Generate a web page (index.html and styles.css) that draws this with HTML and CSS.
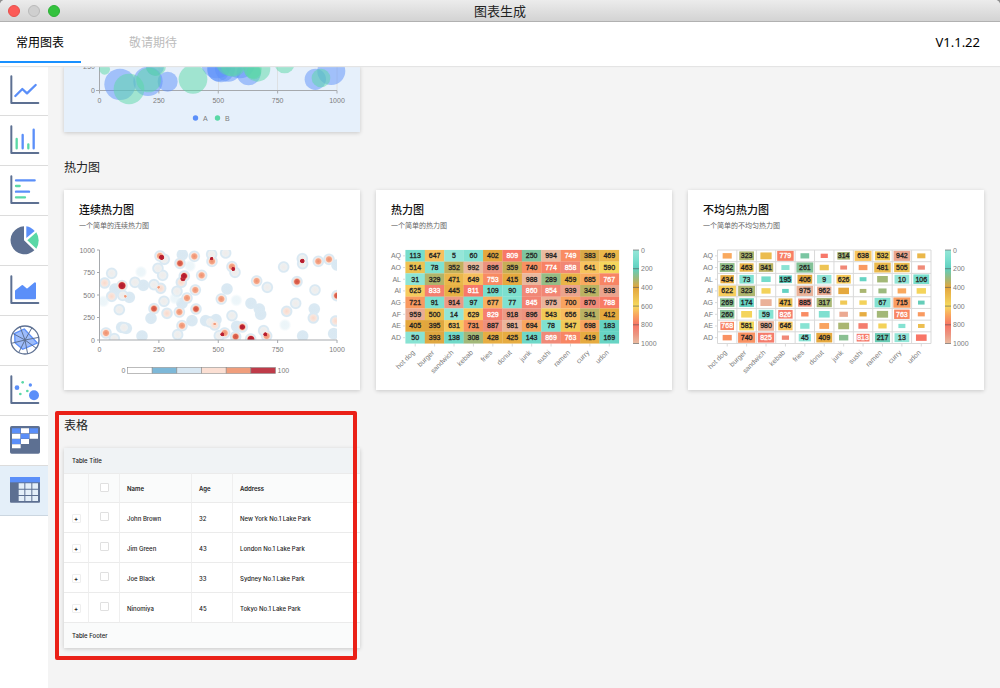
FILE: index.html
```html
<!DOCTYPE html>
<html lang="zh-CN">
<head>
<meta charset="utf-8">
<title>图表生成</title>
<link rel="stylesheet" href="styles.css">
</head>
<body>
<div class="window">
  <div class="titlebar">
    <div class="lights"><span class="light close"></span><span class="light minimize"></span><span class="light maximize"></span></div>
    <h1 class="window-title">图表生成</h1>
  </div>
  <header class="header">
    <div class="tabs">
      <button class="tab active" type="button">常用图表</button>
      <button class="tab pending" type="button">敬请期待</button>
    </div>
    <span class="version">V1.1.22</span>
  </header>
  <div class="body">
    <nav class="sidebar">
      <button class="nav" type="button" aria-label="折线图"><svg viewBox="0 0 90 90"><path class="axis" d="M4 4V84H85"/><path class="s blue" d="M16 63 37 42 51 55 77 30"/></svg></button>
      <button class="nav" type="button" aria-label="柱状图"><svg viewBox="0 0 90 90"><path class="axis" d="M4 4V84H85"/><path class="s blue" d="M38 30V70M71 14V70"/><path class="s green" d="M20 42V70M55 58V70"/></svg></button>
      <button class="nav" type="button" aria-label="条形图"><svg viewBox="0 0 90 90"><path class="axis" d="M4 4V84H85"/><path class="s blue" d="M18 16H74M18 50H57"/><path class="s green" d="M18 33H29M18 67H45"/></svg></button>
      <button class="nav" type="button" aria-label="饼图"><svg viewBox="0 0 90 90"><path fill="#5d7092" d="M42 4V46L73 76A42 42 0 1 1 42 4Z"/><path fill="#5b8ff9" d="M49 4Q63 6 74 18L49 39Z"/><path fill="#5ad8a6" d="M79 22Q93 46 79 71L52 46Z"/></svg></button>
      <button class="nav" type="button" aria-label="面积图"><svg viewBox="0 0 90 90"><path class="axis" d="M4 4V84H85"/><path fill="#5b8ff9" stroke="#5b8ff9" stroke-width="6" stroke-linejoin="round" d="M18 48 37 33 51 45 75 25V70H18Z"/></svg></button>
      <button class="nav" type="button" aria-label="雷达图"><svg viewBox="0 0 90 90"><path fill="#5b8ff9" fill-opacity=".6" stroke="#5b8ff9" stroke-width="4" d="M14 25 43 12 82 54 38 73 15 53Z"/><g fill="none" stroke="#5d7092" stroke-width="4"><circle cx="45" cy="45" r="42"/><path stroke-width="3" d="M45 45 30 5M45 45 66 8M45 45 87 37M45 45 79 70M45 45 53 87M45 45 26 83M45 45 4 55M45 45 8 25"/></g></svg></button>
      <button class="nav" type="button" aria-label="散点图"><svg viewBox="0 0 90 90"><path class="axis" d="M4 4V84H85"/><g fill="#5b8ff9"><circle cx="21" cy="38" r="7"/><circle cx="61" cy="30" r="5"/><circle cx="72" cy="61" r="15"/></g><g fill="#5ad8a6"><circle cx="38" cy="22" r="4"/><circle cx="31" cy="57" r="4"/><circle cx="52" cy="48" r="4"/></g></svg></button>
      <button class="nav" type="button" aria-label="热力图"><svg viewBox="0 0 90 90"><rect y="3" width="90" height="83" rx="5" fill="#5d7092"/><path fill="#5b8ff9" d="M6 10H32V25H6ZM58 10H84V25H58ZM32 26H58V41H32ZM6 42H32V57H6Z"/><path fill="#fff" d="M33 10H57V25H33ZM6 26H31V41H6ZM59 26H84V41H59ZM33 42H57V57H33ZM6 58H32V70H6Z"/></svg></button>
      <button class="nav current" type="button" aria-label="表格"><svg viewBox="0 0 90 90"><rect y="6" width="90" height="77" rx="3" fill="#5d7092"/><path fill="#5b8ff9" d="M0 6H90V22H0Z"/><path fill="#e4eff9" d="M26 25H43V41H26ZM46 25H64V41H46ZM67 25H84V41H67ZM26 44H43V60H26ZM46 44H64V60H46ZM67 44H84V60H67ZM26 63H43V78H26ZM46 63H64V78H46ZM67 63H84V78H67Z"/></svg></button>
    </nav>
    <main class="content">
      <section class="grid">
        <article class="card selected"><svg class="chart" id="bubble" viewBox="0 0 296 66"></svg></article>
      </section>
      <section>
        <h2 class="section-title">热力图</h2>
        <div class="grid">
          <article class="card"><h3>连续热力图</h3><p>一个简单的连续热力图</p><svg class="chart" id="density" viewBox="0 42 296 158"></svg></article>
          <article class="card"><h3>热力图</h3><p>一个简单的热力图</p><svg class="chart" id="heat" viewBox="0 42 296 158"></svg></article>
          <article class="card"><h3>不均匀热力图</h3><p>一个简单的不均匀热力图</p><svg class="chart" id="uneven" viewBox="0 42 296 158"></svg></article>
        </div>
      </section>
      <section>
        <h2 class="section-title">表格</h2>
        <div class="grid">
          <div class="marked">
            <article class="card table-card">
              <div class="table-title">Table Title</div>
              <table>
                <colgroup><col class="c-expand"><col class="c-check"><col class="c-name"><col class="c-age"><col></colgroup>
                <thead><tr><th></th><th class="mid"><input type="checkbox" aria-label="Select all"></th><th>Name</th><th>Age</th><th>Address</th></tr></thead>
                <tbody>
                  <tr><td class="mid"><button class="expand" type="button">+</button></td><td class="mid"><input type="checkbox" aria-label="John Brown"></td><td>John Brown</td><td>32</td><td>New York No.1 Lake Park</td></tr>
                  <tr><td class="mid"><button class="expand" type="button">+</button></td><td class="mid"><input type="checkbox" aria-label="Jim Green"></td><td>Jim Green</td><td>43</td><td>London No.1 Lake Park</td></tr>
                  <tr><td class="mid"><button class="expand" type="button">+</button></td><td class="mid"><input type="checkbox" aria-label="Joe Black"></td><td>Joe Black</td><td>33</td><td>Sydney No.1 Lake Park</td></tr>
                  <tr><td class="mid"><button class="expand" type="button">+</button></td><td class="mid"><input type="checkbox" aria-label="Ninomiya"></td><td>Ninomiya</td><td>45</td><td>Tokyo No.1 Lake Park</td></tr>
                </tbody>
              </table>
              <div class="table-footer">Table Footer</div>
            </article>
            <div class="highlight"></div>
          </div>
        </div>
      </section>
    </main>
  </div>
</div>
<script src="charts.js"></script>
</body>
</html>
```

FILE: styles.css
```css
* { box-sizing: border-box; }
body { margin: 0; background: #8f8f8f; color: #000; font-family: Inter, "Noto Sans CJK SC", sans-serif; }
h1, h2, h3, p { margin: 0; font-weight: 400; }
button { margin: 0; padding: 0; border: 0; background: none; font: inherit; color: inherit; }

.window { display: flex; flex-direction: column; height: 100vh; overflow: hidden; border-radius: 5px 5px 0 0; background: #f4f4f4; }
.titlebar { display: grid; grid-template-columns: 1fr auto 1fr; align-items: center; flex: none; height: 22px; padding: 0 8px; background: linear-gradient(#ececec, #d3d3d3); border-bottom: 1px solid #b1b1b1; }
.lights { display: flex; gap: 8px; }
.light { width: 12px; height: 12px; border-radius: 50%; border: 1px solid; }
.close { background: #fc5b57; border-color: #e5504b; }
.minimize { background: #cfcfcf; border-color: #b9b9b9; }
.maximize { background: #34c23e; border-color: #2bb035; }
.window-title { font-size: 13px; line-height: 20px; color: #222; }

.header { display: flex; justify-content: space-between; flex: none; height: 44px; padding-right: 20px; background: #fff; box-shadow: 0 1px 1px #e4e4e4; position: relative; z-index: 1; }
.tabs { display: flex; gap: 32px; }
.tab { height: 41px; width: 81px; padding: 0 16px; text-align: left; font-size: 12px; white-space: nowrap; border-bottom: 2px solid transparent; }
.tab.active { border-color: #1890ff; }
.tab.pending { color: #bcbcbc; }
.version { font-family: "Noto Sans", sans-serif; font-size: 13px; line-height: 41px; }

.body { display: flex; flex: 1; min-height: 0; }
.sidebar { flex: none; width: 48px; background: #fff; }
.nav { display: flex; align-items: center; justify-content: center; width: 100%; height: 50px; padding: 0 0 1px 2px; border-bottom: 1px solid #dcdcdc; }
.nav svg { width: 30px; height: 30px; }
.nav.current { background: #e4eff9; border-color: #cbd6e0; }
.axis { fill: none; stroke: #5d7092; stroke-width: 6; stroke-linecap: round; stroke-linejoin: round; }
.s { fill: none; stroke-width: 7; stroke-linecap: round; stroke-linejoin: round; }
.blue { stroke: #5b8ff9; }
.green { stroke: #5ad8a6; }

.content { flex: 1; min-width: 0; padding: 0 16px; overflow: hidden; }
.section-title { padding: 26px 0 12px; font-size: 12px; line-height: 20px; color: #222; }
.grid { display: grid; grid-template-columns: repeat(3, minmax(0, 1fr)); gap: 16px; }
.card { background: #fff; box-shadow: 0 1px 4px rgba(0, 0, 0, .18); }
.card.selected { background: #e6f0fb; }
.card h3 { padding: 12px 15px 0; font-size: 11px; line-height: 16px; font-weight: 500; color: #111; }
.card p { padding: 2px 15px 0; font-size: 7px; line-height: 12px; color: #666; }
.chart { display: block; width: 100%; font-family: "Liberation Sans", Arial, sans-serif; font-size: 7px; fill: #7c7c7c; }
.start { text-anchor: start; }
.middle { text-anchor: middle; }
.end { text-anchor: end; }
.rule { fill: none; stroke: #a6a9ad; stroke-width: 1; }
.gridline { fill: none; stroke: #d9d9d9; stroke-width: 1; }
.value { text-anchor: middle; fill: #222; stroke: #222; stroke-width: .3; }
.value.light-text { fill: #fff; stroke: #fff; }

.marked { position: relative; }
.highlight { position: absolute; top: -37px; right: 3px; bottom: -12px; left: -9px; border: 4px solid #ea2017; border-radius: 2px; pointer-events: none; }
.table-card { font-size: 6px; color: #222; font-weight: 500; }
.table-title { height: 25px; padding: 0 8px; line-height: 25px; background: #f0f3f5; }
.table-footer { height: 25px; padding: 0 8px; line-height: 25px; background: #fafbfb; }
table { width: 100%; table-layout: fixed; border-collapse: separate; border-spacing: 0; }
.c-expand { width: 25px; }
.c-check { width: 31px; }
.c-name { width: 72px; }
.c-age { width: 41px; }
th, td { height: 30px; padding: 1px 7px 0; text-align: left; vertical-align: middle; border-right: 1px solid #efefef; border-bottom: 1px solid #ebebeb; }
th { font-weight: 600; background: #fafbfb; border-top: 1px solid #ebebeb; }
th:last-child, td:last-child { border-right: 0; }
.mid { padding: 1px 0 0; text-align: center; }
input { display: block; appearance: none; width: 9px; height: 9px; margin: 0 auto 3px; border: 1px solid #e0e0e0; border-radius: 1px; background: #fff; }
.expand { display: block; width: 9px; height: 9px; margin: 0 auto; border: 1px solid #eee; border-radius: 1px; line-height: 7px; text-align: center; font-weight: 700; }
```

FILE: charts.js
```js
const NS = 'http://www.w3.org/2000/svg';

function add(parent, tag, attrs, text) {
  const el = document.createElementNS(NS, tag);
  for (const key in attrs) el.setAttribute(key, attrs[key]);
  if (text !== undefined) el.textContent = text;
  parent.appendChild(el);
  return el;
}

const LEFT = 35.5, RIGHT = 273;

function xAxis(svg, y) {
  add(svg, 'path', { class: 'rule', d: `M${LEFT} ${y}H${RIGHT}` });
  for (let i = 0; i <= 4; i++) {
    const x = LEFT + (RIGHT - LEFT) * i / 4;
    add(svg, 'path', { class: 'rule', d: `M${x} ${y}v3` });
    add(svg, 'text', { class: 'middle', x, y: y + 12 }, i * 250);
  }
}

/* Bubble chart */
(function () {
  const svg = document.getElementById('bubble');
  add(svg, 'path', { class: 'gridline', d: 'M95 0V24M154.5 0V24M213.5 0V24M273 0V24M35.5 0.5H273', 'stroke-opacity': .7 });
  add(svg, 'path', { class: 'rule', d: 'M35.5 0V24.5M32 24.5H36' });
  xAxis(svg, 24.5);
  add(svg, 'text', { class: 'end', x: 31, y: 3 }, 250);
  add(svg, 'text', { class: 'end', x: 31, y: 27 }, 0);
  const g = add(svg, 'g', { transform: 'scale(.3333) translate(-192 -198)', 'fill-opacity': .5 });
  const blue = [[360, 253, 47], [444, 244, 44], [503, 245, 30], [465, 200, 27], [650, 188, 47], [663, 205, 42], [655, 212, 32], [685, 205, 40], [720, 190, 45], [746, 220, 36], [946, 238, 32], [994, 213, 42]];
  const green = [[314, 208, 16], [387, 267, 46], [446, 240, 37], [468, 198, 30], [579, 238, 43], [692, 182, 46], [700, 190, 40], [758, 208, 27], [772, 206, 39], [762, 216, 22], [854, 190, 30], [963, 234, 28]];
  blue.forEach(([cx, cy, r]) => add(g, 'circle', { cx, cy, r, fill: '#5b8ff9' }));
  green.forEach(([cx, cy, r]) => add(g, 'circle', { cx, cy, r, fill: '#5ad8a6' }));
  add(svg, 'circle', { cx: 131.5, cy: 52, r: 2.7, fill: '#5b8ff9' });
  add(svg, 'text', { class: 'start', x: 139, y: 55 }, 'A');
  add(svg, 'circle', { cx: 153.5, cy: 52, r: 2.7, fill: '#5ad8a6' });
  add(svg, 'text', { class: 'start', x: 161, y: 55 }, 'B');
})();

/* Continuous heat map: [x, y, intensity 0-6] */
(function () {
  const svg = document.getElementById('density');
  const points = [
    [155, 250, 2], [243, 246, 0], [134, 279, 3], [165, 297, 1], [225, 277, 2], [250, 286, 1], [282, 284, 2], [302, 295, 3], [155, 319, 3], [188, 316, 2], [208, 322, 1], [130, 334, 0], [178, 359, 2], [282, 356, 5], [273, 385, 1], [321, 370, 3], [312, 334, 2], [138, 429, 4], [163, 446, 2], [185, 412, 1], [199, 415, 1], [192, 413, 2], [246, 438, 1],
    [313, 208, 2], [300, 198, 4], [294, 235, 2], [308, 256, 2], [367, 194, 1], [403, 199, 4], [360, 220, 5], [390, 228, 0], [425, 256, 4], [364, 277, 3], [373, 258, 5], [351, 304, 2], [406, 300, 4], [381, 324, 4], [366, 340, 1], [345, 325, 0], [408, 357, 5], [358, 366, 4], [396, 392, 1], [366, 407, 4], [353, 434, 2],
    [455, 193, 2], [456, 214, 4], [497, 189, 2], [516, 230, 4], [525, 247, 2], [501, 297, 1], [529, 331, 0], [573, 340, 1], [484, 327, 4], [590, 273, 4], [622, 292, 2], [598, 357, 1], [602, 373, 1], [516, 377, 2], [468, 389, 1], [437, 392, 1], [450, 396, 2], [464, 405, 3], [494, 429, 4], [478, 437, 2], [530, 409, 1], [547, 411, 5], [527, 440, 5], [572, 447, 5], [611, 422, 2], [620, 438, 4],
    [671, 231, 2], [727, 206, 2], [728, 221, 2], [775, 214, 4], [807, 208, 4], [831, 225, 1], [711, 275, 5], [765, 300, 2], [707, 340, 2], [831, 317, 5], [763, 357, 1], [760, 384, 3], [680, 364, 3], [675, 405, 0], [728, 438, 1], [827, 393, 3], [821, 431, 1]
  ];
  const hot = [[186, 287, 10], [305, 202, 7], [369, 266, 7], [372, 258, 8], [455, 206, 4], [520, 237, 5], [727, 213, 6], [487, 433, 5], [616, 433, 5], [573, 448, 10], [547, 411, 7], [296, 292, 4], [196, 319, 4], [464, 402, 4]];
  const defs = add(svg, 'defs', {});
  const ramp = (id, stops) => {
    const grad = add(defs, 'radialGradient', { id });
    stops.forEach(([offset, color, opacity]) => add(grad, 'stop', { offset, 'stop-color': color, 'stop-opacity': opacity }));
  };
  ramp('h0', [[0, '#e6f2f7', .8], [.6, '#e6f2f7', .7], [1, '#e6f2f7', 0]]);
  ramp('h1', [[0, '#d9e8f2', 1], [.82, '#dae9f3', 1], [1, '#dceaf3', 0]]);
  ramp('c2', [[0, '#f0ecea', 1], [.75, '#edf0f1', 1], [1, '#dceaf3', 0]]);
  ramp('c3', [[0, '#fbd9ca', 1], [.7, '#f7e7e0', 1], [1, '#dceaf3', 0]]);
  ramp('c4', [[0, '#f08f6c', 1], [.55, '#f4a88b', 1], [.75, '#fce3d8', 1], [1, '#f3f3f3', 0]]);
  ramp('c5', [[0, '#d4503f', 1], [.5, '#dd6652', 1], [.72, '#f9d2c1', 1], [1, '#f3f3f3', 0]]);
  ramp('c6', [[0, '#b2182b', 1], [.75, '#bd2636', 1], [1, '#e67b68', 0]]);
  const clip = add(defs, 'clipPath', { id: 'plot' });
  add(clip, 'rect', { x: LEFT, y: 60, width: RIGHT - LEFT, height: 90 });
  const outer = add(svg, 'g', { 'clip-path': 'url(#plot)' });
  const g = add(outer, 'g', { transform: 'translate(-4 0) scale(.3333)' });
  add(g, 'circle', { cx: 186, cy: 287, r: 19, fill: 'url(#h1)' });
  points.forEach(([cx, cy, n]) => add(g, 'circle', { cx, cy, r: 19, fill: n ? 'url(#h1)' : 'url(#h0)' }));
  points.filter(p => p[2] > 1).forEach(([cx, cy, n]) => add(g, 'circle', { cx, cy, r: 14, fill: `url(#c${n})` }));
  add(g, 'circle', { cx: 186, cy: 287, r: 16, fill: 'url(#c5)' });
  hot.forEach(([cx, cy, r], i) => add(g, 'circle', { cx, cy, r: r + 2, fill: i < 11 ? 'url(#c6)' : 'url(#c4)' }));

  add(svg, 'path', { class: 'rule', d: `M${LEFT} 60V150` });
  for (let i = 0; i <= 4; i++) {
    const y = 150 - 22.5 * i;
    add(svg, 'path', { class: 'rule', d: `M33 ${y}H${LEFT}` });
    add(svg, 'text', { class: 'end', x: 31, y: y + 2.5 }, i * 250);
  }
  xAxis(svg, 150);
  ['#ffffff', '#7db8d8', '#d9e8f3', '#fbdfd3', '#f09e7c', '#bf3b49'].forEach((fill, i) =>
    add(svg, 'rect', { x: 63.5 + i * 24.67, y: 177.5, width: 24.67, height: 6, fill, stroke: '#8e8e8e', 'stroke-width': .6 }));
  add(svg, 'text', { class: 'end', x: 61.5, y: 183 }, 0);
  add(svg, 'text', { class: 'start', x: 213.5, y: 183 }, 100);
})();

/* Category heat maps */
const foods = ['hot dog', 'burger', 'sandwich', 'kebab', 'fries', 'donut', 'junk', 'sushi', 'ramen', 'curry', 'udon'];
const names = ['AQ', 'AO', 'AL', 'AI', 'AG', 'AF', 'AE', 'AD'];
const scale = [[0, '#96e6d8'], [100, '#7adfce'], [200, '#5fcfbf'], [300, '#9cba7e'], [400, '#e4a63c'], [500, '#ecbe50'], [600, '#f6da5e'], [700, '#f9a35f'], [800, '#f87566'], [900, '#ec9480'], [1000, '#e9bda2']];
const CW = 213.5 / 11, CH = 93.5 / 8, GX = 29.5, GY = 60;

function colorAt(v) {
  const i = Math.min(scale.findIndex((s, k) => k + 1 === scale.length || scale[k + 1][0] >= v), scale.length - 2);
  const [a, ca] = scale[i], [b, cb] = scale[i + 1], t = (v - a) / (b - a);
  const ch = k => Math.round(parseInt(ca.substr(k, 2), 16) * (1 - t) + parseInt(cb.substr(k, 2), 16) * t);
  return `rgb(${ch(1)},${ch(3)},${ch(5)})`;
}

function frame(svg, id) {
  names.forEach((name, r) => {
    const y = GY + (r + .5) * CH;
    add(svg, 'text', { class: 'end', x: 25, y: y + 2.5 }, name);
    add(svg, 'path', { class: 'gridline', d: `M27 ${y}h2` });
  });
  foods.forEach((food, c) => {
    const x = GX + (c + .5) * CW;
    add(svg, 'path', { class: 'gridline', d: `M${x} ${GY + 8 * CH}v3` });
    add(svg, 'text', { class: 'end', transform: `translate(${x} 163) rotate(-45)` }, food);
  });
  const grad = add(add(svg, 'defs', {}), 'linearGradient', { id, x1: 0, y1: 0, x2: 0, y2: 1 });
  scale.forEach(([v, color]) => add(grad, 'stop', { offset: v / 1000, 'stop-color': color }));
  add(svg, 'rect', { x: 257, y: GY, width: 6, height: 93.5, fill: `url(#${id})` });
  for (let i = 0; i <= 5; i++) {
    const y = GY + 18.7 * i;
    add(svg, 'path', { d: `M257 ${y}h6`, stroke: '#555', 'stroke-width': .8, 'stroke-opacity': .75 });
    add(svg, 'text', { class: 'start', x: 265, y: y + 2.5 }, i * 200);
  }
}

function cell(svg, r, c, v, size, labelled) {
  const x = GX + (c + .5) * CW, y = GY + (r + .5) * CH;
  add(svg, 'rect', { x: x - CW * size / 2, y: y - CH * size / 2, width: CW * size, height: CH * size, fill: colorAt(v) });
  if (labelled) add(svg, 'text', { class: 'value' + (v > 745 && v < 870 ? ' light-text' : ''), x, y: y + 2.5 }, v);
}

const even = [
  [113, 647, 5, 60, 402, 809, 250, 994, 749, 383, 469],
  [514, 78, 352, 992, 896, 359, 740, 774, 858, 641, 590],
  [31, 329, 471, 649, 753, 415, 988, 289, 459, 685, 767],
  [625, 833, 445, 811, 109, 90, 860, 854, 939, 342, 938],
  [721, 91, 914, 97, 677, 77, 845, 975, 700, 870, 788],
  [959, 500, 14, 629, 829, 918, 896, 543, 656, 341, 412],
  [405, 395, 631, 731, 887, 981, 694, 78, 547, 698, 183],
  [50, 393, 138, 308, 428, 425, 143, 869, 763, 419, 169]
];
const heat = document.getElementById('heat');
frame(heat, 'scale-even');
even.forEach((row, r) => row.forEach((v, c) => cell(heat, r, c, v, 1.01, true)));

/* [value, relative size] pairs; small cells carry no label */
const uneven = [
  [[690, .47], [323, .76], [490, .58], [779, .85], [245, .45], [810, .37], [314, .65], [638, .87], [532, .78], [942, .86], [470, .42]],
  [[282, .76], [463, .72], [341, .74], [40, .42], [261, .87], [520, .47], [860, .35], [720, .45], [481, .85], [505, .8], [870, .37]],
  [[434, .7], [73, .74], [120, .48], [195, .66], [406, .76], [9, .74], [626, .74], [170, .35], [310, .55], [10, .76], [106, .82]],
  [[622, .9], [323, .87], [570, .47], [180, .34], [975, .86], [962, .74], [410, .55], [320, .34], [300, .42], [690, .44], [580, .48]],
  [[269, .74], [174, .75], [970, .58], [471, .72], [885, .7], [317, .78], [540, .36], [570, .38], [67, .82], [715, .88], [210, .34]],
  [[260, .74], [580, .56], [59, .76], [826, .74], [750, .38], [80, .56], [950, .44], [430, .37], [310, .58], [763, .8], [720, .36]],
  [[768, .7], [581, .76], [980, .82], [646, .74], [50, .48], [700, .5], [320, .56], [830, .48], [570, .43], [60, .36], [500, .34]],
  [[740, .47], [740, .88], [825, .84], [860, .37], [45, .63], [409, .82], [270, .48], [813, .66], [217, .78], [13, .76], [800, .55]]
];
const unevenSvg = document.getElementById('uneven');
frame(unevenSvg, 'scale-uneven');
let lines = '';
for (let r = 0; r <= 8; r++) lines += `M${GX} ${GY + r * CH}h213.5`;
for (let c = 0; c <= 11; c++) lines += `M${GX + c * CW} ${GY}v93.5`;
add(unevenSvg, 'path', { class: 'gridline', d: lines });
uneven.forEach((row, r) => row.forEach(([v, s], c) => cell(unevenSvg, r, c, v, s, s > .6)));
```
